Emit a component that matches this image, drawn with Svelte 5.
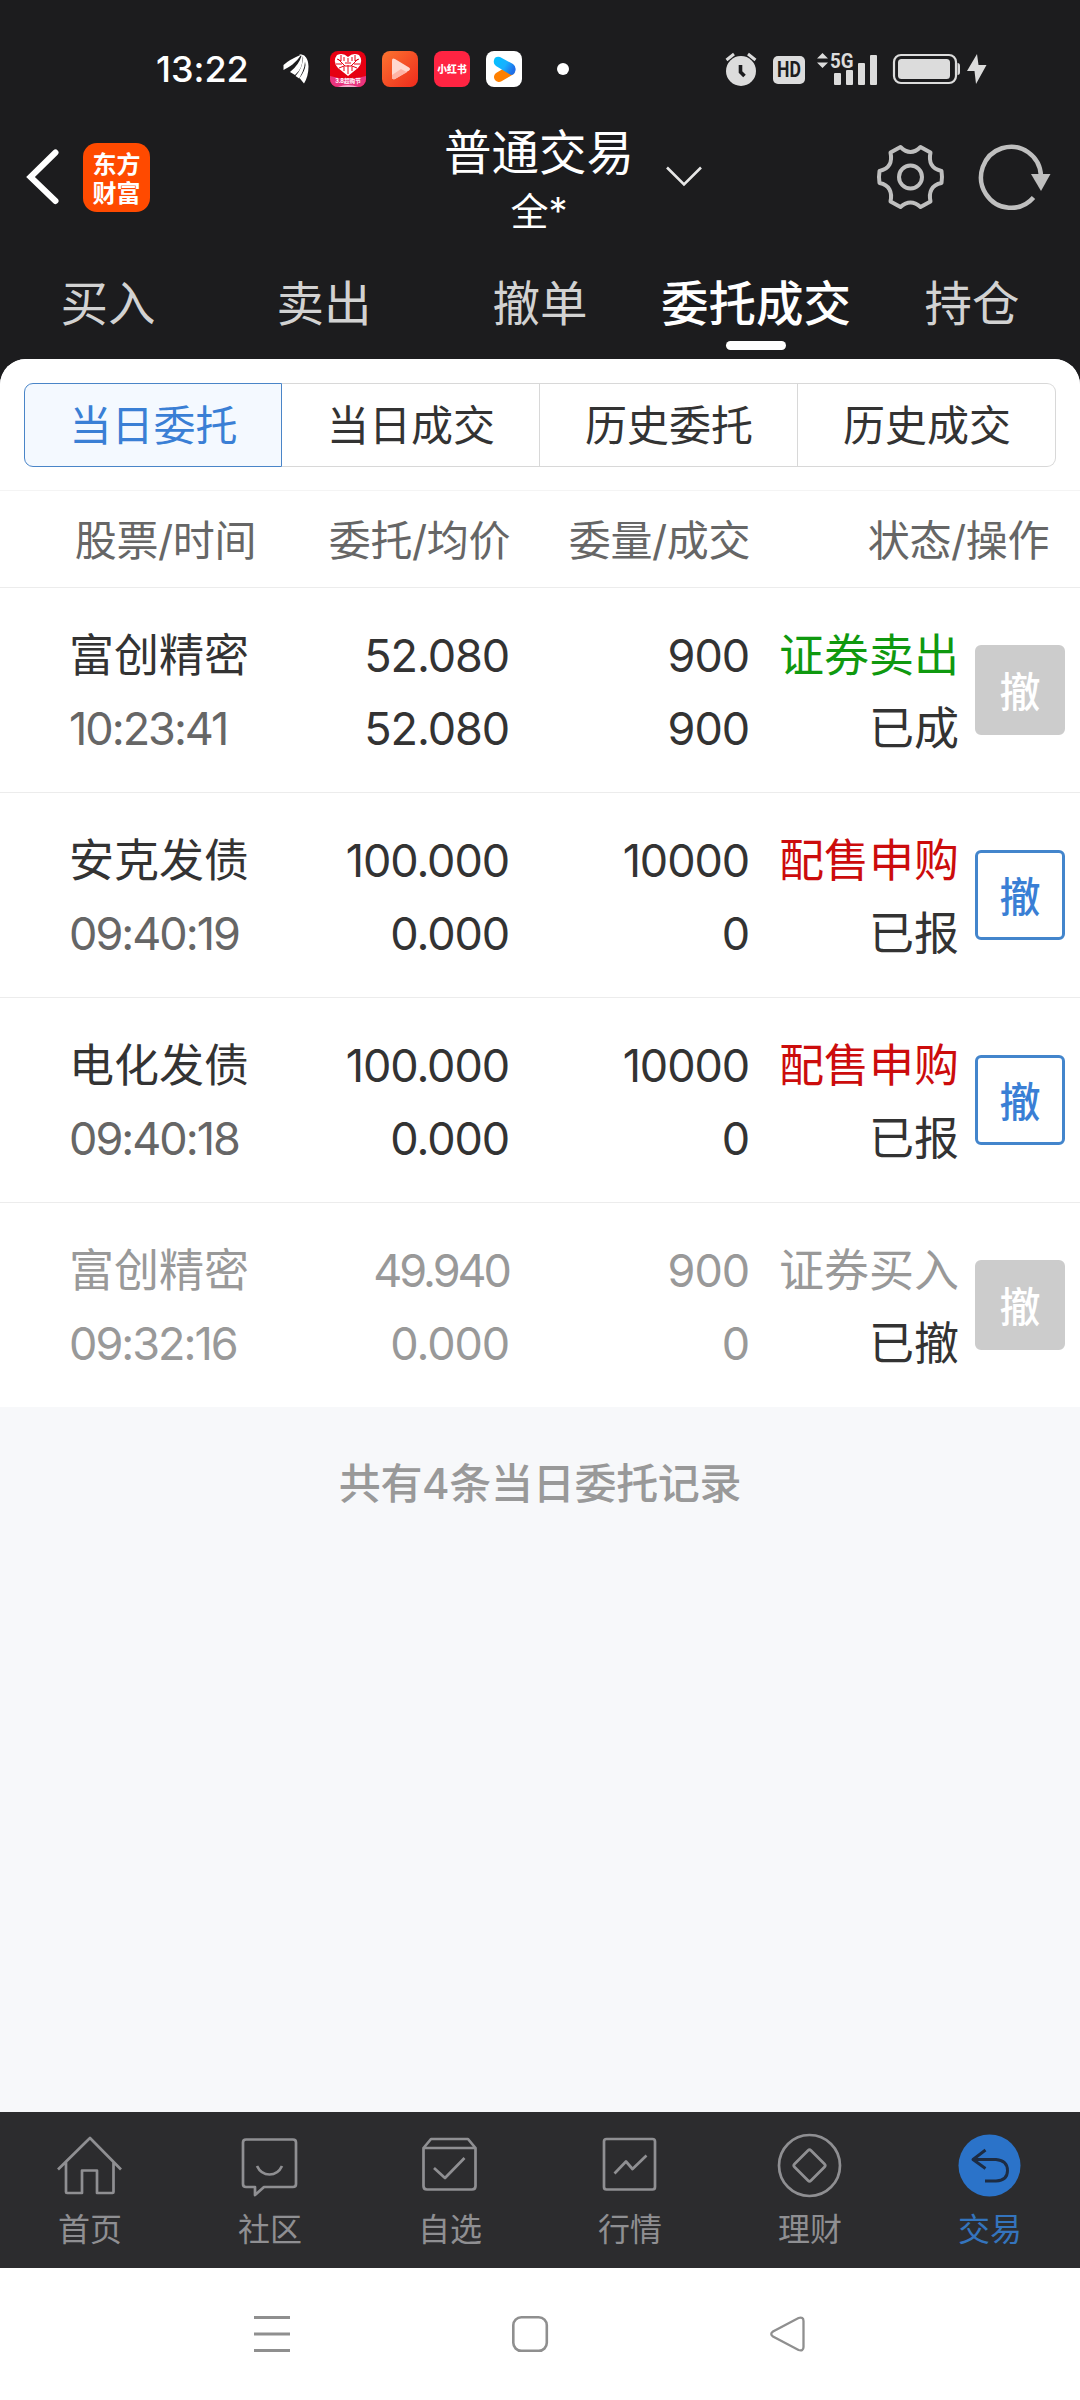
<script>
  const tabs = ['买入', '卖出', '撤单', '委托成交', '持仓'];
  const segments = ['当日委托', '当日成交', '历史委托', '历史成交'];
  const orders = [
    { name: '富创精密', time: '10:23:41', price: '52.080', avg: '52.080', qty: '900', filled: '900', action: '证券卖出', tone: 'sell', state: '已成', live: false },
    { name: '安克发债', time: '09:40:19', price: '100.000', avg: '0.000', qty: '10000', filled: '0', action: '配售申购', tone: 'buy', state: '已报', live: true },
    { name: '电化发债', time: '09:40:18', price: '100.000', avg: '0.000', qty: '10000', filled: '0', action: '配售申购', tone: 'buy', state: '已报', live: true },
    { name: '富创精密', time: '09:32:16', price: '49.940', avg: '0.000', qty: '900', filled: '0', action: '证券买入', tone: 'void', state: '已撤', live: false }
  ];
  // Strings rich in open-shaped digits are set tighter.
  const tight = (value) => (value.match(/[49]/g) ?? []).length > 2;
</script>

<div class="screen">
  <div class="status">
    <span class="clock">13:22</span>
    <svg class="bird" width="28" height="32" viewBox="283 54 28 32" fill="#fff">
      <path d="M283.500 71V66q5-5 18-10.500-4 6-9 10-4 3-9 5.500z" />
      <path d="M290 73q9-7 12-17.500l.7 2q.5 12-7.700 18.500z" />
      <path d="M295.500 77q7.500-8 8-21l1.200 1q2 10-5.500 22.500z" />
      <path d="M299 55.200q9 0 9.500 12 0 10-4.500 17.300L299.500 79q5.500-7 6-13 0-8-6.500-10.800z" />
    </svg>
    <svg class="app" width="36" height="36" viewBox="0 0 36 36">
      <clipPath id="r"><rect width="36" height="36" rx="8" /></clipPath>
      <g clip-path="url(#r)">
        <rect width="36" height="36" fill="#e60012" />
        <path d="M0 25q18 5 36 0v11H0z" fill="#e8357f" />
        <path d="M18 25L8 17q-6-7-1-13 6-3 11 2 5-5 11-2 5 6-1 13z" fill="#fff" />
        <path d="M18 7v4M18 14v9M8 8l7 7M28 8l-7 7M6 13h6M30 13h-6M11 4v6M25 4v6M9 17l5-2v5M27 17l-5-2v5M15 12h6M15 15h6M7 8l4 2M29 8l-4 2M14 6v4M22 6v4" stroke="#e60012" stroke-width="1" fill="none" />
        <path d="M8 36q10-4 20 0z" fill="#f7a8cc" />
        <text x="18" y="31.500" font-size="5.600" font-weight="700" fill="#fff" text-anchor="middle">3.8超购节</text>
      </g>
    </svg>
    <svg class="app" width="36" height="36" viewBox="0 0 36 36">
      <defs><linearGradient id="g" x2="1" y2="1"><stop stop-color="#fb7430" /><stop offset="1" stop-color="#ef2a1c" /></linearGradient></defs>
      <rect width="36" height="36" rx="8" fill="url(#g)" />
      <path d="M10 9.500q0-3 3-1.500L27 16.500q2 1.500 0 3L13 28q-3 1-3-1.500z" fill="#ffd8cf" />
      <path d="M10 24l9-6 6 3.200L13 28q-3 1-3-1.500z" fill="#ffb3a5" />
    </svg>
    <svg class="app" width="36" height="36" viewBox="0 0 36 36">
      <rect width="36" height="36" rx="8" fill="#ff2442" />
      <text x="18" y="22" font-size="9.800" font-weight="900" fill="#fff" text-anchor="middle">小红书</text>
    </svg>
    <svg class="app" width="36" height="36" viewBox="0 0 36 36">
      <defs><linearGradient id="b" x2="1" y2=".5"><stop stop-color="#00c3ff" /><stop offset=".6" stop-color="#18b0ff" /><stop offset="1" stop-color="#1e6fe8" /></linearGradient></defs>
      <rect width="36" height="36" rx="8" fill="#fff" />
      <path d="M13 26L24 19.500" stroke="#ff8000" stroke-width="10" stroke-linecap="round" />
      <path d="M8 9q1-4 6-3l13 7q4 3 2 8-1 3-4 3L10 15q-3-2-2-6z" fill="url(#b)" />
    </svg>
    <i class="dot"></i>
    <svg width="32" height="36" viewBox="725 51 32 36">
      <circle cx="741" cy="71" r="15" fill="#dcdcdc" />
      <path d="M726.500 60l7.500-6M755.500 60l-7.500-6" stroke="#dcdcdc" stroke-width="3" />
      <path d="M740.500 65v7l4 4" stroke="#1c1c1e" stroke-width="3.600" fill="none" />
    </svg>
    <span class="hd"><span>HD</span></span>
    <svg class="signal" width="62" height="34" viewBox="816 51 62 34" fill="#dcdcdc">
      <path d="M817 57.500l5.500-5.500 5.500 5.500zM817 61.500h11l-5.500 5.500z" />
      <text class="g5" x="830" y="67" font-size="20.500" font-weight="700" textLength="23.500" lengthAdjust="spacingAndGlyphs">5G</text>
      <rect x="834" y="72" width="7" height="12" rx="1" /><rect x="846" y="69" width="7" height="15" rx="1" />
      <rect x="858" y="62" width="7" height="22" rx="1" /><rect x="870" y="54" width="7" height="30" rx="1" />
    </svg>
    <svg class="battery" width="96" height="34" viewBox="892 52 96 34" fill="#dcdcdc">
      <rect x="894" y="55" width="62" height="28" rx="7" fill="none" stroke="#dcdcdc" stroke-width="2.200" />
      <rect x="898" y="59" width="52" height="20" rx="3.500" /><path d="M957.500 63q2.500 0 2.500 3v6q0 3-2.500 3z" />
      <path d="M977 54l-10 17h7.500l1.500 13 10.500-19h-8z" />
    </svg>
  </div>

  <header>
    <svg class="back" width="34" height="60" viewBox="25 148 34 60"><path d="M55.500 153.500L30.500 178l25 24" fill="none" stroke="#fff" stroke-width="6" stroke-linecap="round" stroke-linejoin="miter" /></svg>
    <div class="logo"><span>东方</span><span>财富</span></div>
    <div class="title"><b>普通交易</b><span>全*</span></div>
    <svg class="chev" width="38" height="22" viewBox="665 166 38 22"><path d="M667 167.500l17 17 17-17" fill="none" stroke="#e6e6e6" stroke-width="2.600" /></svg>
    <svg class="gear" width="70" height="70" viewBox="-34.500 -35 70 70" fill="none" stroke="#bfbfbf" stroke-width="4" stroke-linejoin="round">
      <path d="M-10-30Q0-20 10-30L20-24.500C18-15 21-8 31-6Q32 0 31 6C21 8 18 15 20 24.500L10 30Q0 21 -10 30L-20 24.500C-18 15-21 8-31 6Q-32 0-31-6C-21-8-18-15-20-24.500z" />
      <circle r="11.500" />
    </svg>
    <svg class="refresh" width="74" height="70" viewBox="977.500 142 74 70"><path d="M1033 197.500A30 30.500 0 1 1 1040.500 176" fill="none" stroke="#bfbfbf" stroke-width="4.500" /><path d="M1030.500 174h19.500l-9.500 17z" fill="#bfbfbf" /></svg>
  </header>

  <nav class="tabs">
    {#each tabs as tab, i}
      <span class:active={i === 3}>{tab}</span>
    {/each}
  </nav>

  <main>
    <div class="panel">
      <div class="segments">
        {#each segments as s, i}
          <span class:active={i === 0}>{s}</span>
        {/each}
      </div>
      <div class="row head">
        <span>股票/时间</span><span>委托/均价</span><span>委量/成交</span><span>状态/操作</span>
      </div>
      {#each orders as o}
        <div class="row order {o.tone}">
          <div class="cell name"><span>{o.name}</span><span class="time">{o.time}</span></div>
          <div class="cell num"><span class:tight={tight(o.price)}>{o.price}</span><span>{o.avg}</span></div>
          <div class="cell num"><span>{o.qty}</span><span>{o.filled}</span></div>
          <div class="cell"><span class="action">{o.action}</span><span class="state">{o.state}</span></div>
          <button class:live={o.live}>撤</button>
        </div>
      {/each}
    </div>
    <p>共有4条当日委托记录</p>
  </main>

  <nav class="bottom">
    <div>
      <svg width="66" height="68" viewBox="57 2131 66 68"><path d="M58 2169.500l32-31.500 31 31.500M66 2162v30q0 1 1 1h15v-22.500h15V2193h15.500q1 0 1-1v-30" /></svg>
      <span>首页</span>
    </div>
    <div>
      <svg width="66" height="68" viewBox="237 2131 66 68"><path d="M246 2139.500h47q3 0 3 3V2184q0 3-3 3h-29l-9 8v-8h-9q-3 0-3-3v-41.500q0-3 3-3zM257 2166q4 8.500 12.500 8.500t12.500-8.500" /></svg>
      <span>社区</span>
    </div>
    <div>
      <svg width="66" height="68" viewBox="417 2131 66 68"><path d="M423.500 2148v38q0 3.500 3.500 3.500h45q3.500 0 3.500-3.500v-38zl7.500-9h37l7.500 9M434 2168l11 10 19.500-20" /></svg>
      <span>自选</span>
    </div>
    <div>
      <svg width="66" height="68" viewBox="597 2131 66 68"><rect x="604" y="2139" width="51" height="50.500" rx="2.500" /><path d="M614.500 2173.500l11.500-12 6.500 7.500 14-13.500" /></svg>
      <span>行情</span>
    </div>
    <div>
      <svg width="66" height="68" viewBox="777 2131 66 68"><circle cx="809.500" cy="2165.500" r="30.500" /><path d="M808 2150.500q1.500-1.500 3 0l13.500 13.500q1.500 1.500 0 3l-13.500 13.500q-1.500 1.500-3 0L794.500 2167q-1.500-1.500 0-3z" /></svg>
      <span>理财</span>
    </div>
    <div class="active">
      <svg width="66" height="68" viewBox="957 2131 66 68"><circle cx="989.500" cy="2165.500" r="31" fill="#2b73c9" stroke="none" /><path d="M985.500 2150l-12.500 9.500 12.500 9M974 2159.500h22q11.500 1 11.500 11t-11.500 10.500h-11" stroke="#1d2c43" stroke-width="2.900" /></svg>
      <span>交易</span>
    </div>
  </nav>

  <div class="system">
    <svg width="560" height="40" viewBox="250 2314 560 40" fill="none" stroke="#8f8f8f" stroke-width="2.600">
      <path d="M254 2317.500h36M254 2334h36M254 2350.500h36" stroke-width="2.800" />
      <rect x="513.300" y="2317.300" width="33.500" height="33.500" rx="8" />
      <path d="M773 2331.500q-3.500 2.500 0 5l25.500 13.500q5 1.500 5-3v-26q0-4.500-5-3z" stroke-width="2.300" />
    </svg>
  </div>
</div>

<style>
  :global(body) { margin: 0; background: #f7f8fa; }
  .screen {
    width: 1080px; height: 2400px; display: flex; flex-direction: column; overflow: hidden;
    background: #1c1c1e; color: #fff;
    font-family: Inter, 'Noto Sans CJK SC', sans-serif; font-feature-settings: 'calt' 0;
  }
  svg { display: block; flex: none; }
  .status { height: 98px; padding: 20px 0 0 156px; display: flex; align-items: center; }
  .clock { width: 127px; font: 500 36px/50px Inter, sans-serif; font-feature-settings: 'calt' 0; white-space: nowrap; }
  .bird { margin-right: 3px; }
  .app { margin-left: 16px; }
  .dot { width: 12px; height: 12px; margin: 0 156px 0 35px; border-radius: 50%; background: #fff; }
  .hd {
    width: 32px; height: 28px; margin: 2px 11px 0 16px; border-radius: 5px; background: #dcdcdc; color: #1c1c1e;
    display: flex; justify-content: center; font: 700 22px/28px Roboto, sans-serif;
  }
  .hd span { transform: scaleX(.8); }
  .signal { overflow: visible; }
  .g5 { font-family: Roboto, sans-serif; }
  .battery { margin-left: 14px; }

  header { height: 118px; display: flex; align-items: center; padding-left: 25px; }
  .logo {
    width: 67px; height: 69px; margin-left: 24px; border-radius: 14px; background: #ff4a00;
    display: flex; flex-direction: column; align-items: center; justify-content: center;
    padding-bottom: 1px; box-sizing: border-box;
    font: 700 24px/29px 'Noto Sans CJK SC', sans-serif;
  }
  .title { width: 200px; margin: 7px 0 0 289px; display: flex; flex-direction: column; align-items: center; white-space: nowrap; }
  .title b { font-weight: 400; font-size: 47.500px; line-height: 60px; }
  .title span { font-size: 38px; line-height: 56px; }
  .chev { margin-left: 26px; }
  .gear { margin-left: 173px; }
  .refresh { margin-left: 32px; }

  .tabs { height: 123px; display: grid; grid-template-columns: repeat(5, 216px); }
  .tabs span {
    display: flex; flex-direction: column; align-items: center; padding-top: 38px;
    font-size: 47.500px; line-height: 60px; color: #d2d2d2; white-space: nowrap;
  }
  .tabs .active { color: #fff; font-weight: 500; }
  .tabs .active::after { content: ''; width: 60px; height: 9px; margin-top: 7px; border-radius: 5px; background: #fff; }

  main { flex: 1; border-radius: 26px 26px 0 0; background: #f7f8fa; overflow: hidden; }
  .panel { background: #fff; padding-top: 24px; }
  .segments { display: grid; grid-template: 84px / repeat(4, 258px); margin: 0 24px 23px; }
  .segments span {
    box-sizing: border-box; border: 1px solid #d8d8d8; border-left-width: 0; padding-left: 1px;
    font-size: 42px; line-height: 84px; text-align: center; color: #333;
  }
  .segments .active { border: 1px solid #4a85c8; border-radius: 9px 0 0 9px; background: #f4f9ff; color: #3a7fd5; }
  .segments span:last-child { border-radius: 0 9px 9px 0; }

  .row { box-sizing: border-box; display: grid; border-top: 1px solid #ececec; white-space: nowrap; }
  .head {
    height: 97px; grid-template-columns: 256px 254px 240px 299px; border-color: #f4f4f4;
    font-size: 42px; line-height: 99px; text-align: right; letter-spacing: -.4px; color: #666;
  }
  .order {
    height: 205px; grid-template-columns: 255px 254px 240px 210px 90px; align-items: center;
    font-size: 45px; line-height: 73px; color: #333;
  }
  .cell { display: flex; flex-direction: column; align-items: flex-end; padding-top: 4px; }
  .name { align-items: flex-start; padding-left: 69px; }
  .num { letter-spacing: -1.100px; }
  .num .tight { letter-spacing: -3px; }
  .time { color: #666; letter-spacing: -2px; }
  .sell .action { color: #0f990f; }
  .buy .action { color: #cc0c0c; }
  .void { color: #999; }
  .void .time { color: #999; }
  .state { color: #333; }
  button {
    width: 90px; height: 90px; margin-left: 16px; padding: 0; box-sizing: border-box; border: 3px solid #ccc; border-radius: 6px;
    background: #ccc; color: #fff; font: 500 41px/82px 'Noto Sans CJK SC', sans-serif; padding-bottom: 2px;
  }
  .live { background: #fff; border-color: #4385cc; color: #3a7fd5; }
  p { margin: 46px 0 0; text-align: center; font-size: 42px; line-height: 62px; letter-spacing: -.3px; font-weight: 500; color: #999; }

  .bottom { height: 156px; display: grid; grid-template-columns: repeat(6, 180px); background: #2c2c2e; color: #8f8f92; }
  .bottom div { display: flex; flex-direction: column; align-items: center; padding-top: 19px; }
  .bottom svg { fill: none; stroke: #8f8f92; stroke-width: 2.700; stroke-linejoin: round; }
  .bottom span { font-size: 32px; line-height: 40px; margin-top: 11px; }
  .bottom .active { color: #3474bd; }
  .system { height: 132px; background: #fff; display: flex; align-items: center; padding-left: 250px; }
</style>
